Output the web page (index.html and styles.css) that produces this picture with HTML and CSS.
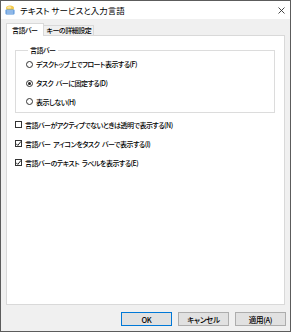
FILE: index.html
```html
<!DOCTYPE html>
<html lang="ja">
<head>
  <meta charset="UTF-8">
  <title>テキスト サービスと入力言語</title>
  <link rel="stylesheet" href="styles.css">
</head>
<body>

  <div class="window">
    <div class="titlebar">
      <svg class="app-icon" width="10" height="10" viewBox="0 0 10 10">
        <ellipse cx="5" cy="3" rx="4" ry="2.6" fill="#f2c94c"/>
        <ellipse cx="4.2" cy="2.4" rx="2" ry="1.2" fill="#fbe7a1"/>
        <rect x="0.5" y="4.5" width="9" height="5" rx="1" fill="#4f8fd8"/>
        <rect x="1.5" y="5.5" width="7" height="1" fill="#cfe2f7"/>
        <rect x="1.5" y="7.5" width="7" height="1" fill="#cfe2f7"/>
      </svg>
      <span class="title">テキスト サービスと入力言語</span>
      <svg class="close" width="7" height="7" viewBox="0 0 7 7">
        <path d="M0.5 0.5 L6.5 6.5 M6.5 0.5 L0.5 6.5" stroke="#333" stroke-width="0.9"/>
      </svg>
    </div>

    <div class="body">
      <div class="tabs">
        <div class="tab active">言語バー</div>
        <div class="tab">キーの詳細設定</div>
      </div>

      <div class="panel">
        <fieldset class="group">
          <legend>言語バー</legend>
          <label class="option">
            <span class="radio"></span>
            デスクトップ上でフロート表示する(F)
          </label>
          <label class="option">
            <span class="radio checked"></span>
            タスク バーに固定する(D)
          </label>
          <label class="option">
            <span class="radio"></span>
            表示しない(H)
          </label>
        </fieldset>

        <label class="check">
          <span class="box"></span>
          言語バーがアクティブでないときは透明で表示する(N)
        </label>
        <label class="check">
          <span class="box"><svg width="7" height="7" viewBox="0 0 7 7"><path d="M1 3.6 L2.8 5.4 L6 1.4" fill="none" stroke="#222" stroke-width="1"/></svg></span>
          言語バー アイコンをタスク バーで表示する(I)
        </label>
        <label class="check">
          <span class="box"><svg width="7" height="7" viewBox="0 0 7 7"><path d="M1 3.6 L2.8 5.4 L6 1.4" fill="none" stroke="#222" stroke-width="1"/></svg></span>
          言語バーのテキスト ラベルを表示する(E)
        </label>
      </div>

      <div class="buttons">
        <button class="default">OK</button>
        <button>キャンセル</button>
        <button>適用(A)</button>
      </div>
    </div>
  </div>

</body>
</html>
```

FILE: styles.css
```css
body {
  margin: 0;
  font-family: "Noto Sans CJK JP", sans-serif;
  font-feature-settings: "palt";
  font-size: 7px;
  font-weight: 500;
  letter-spacing: -0.5px;
  word-spacing: 1.5px;
  color: #000;
}

.window {
  width: 291px;
  height: 332px;
  box-sizing: border-box;
  border: 1px solid #5c5c5c;
  background-color: #f0f0f0;
  display: flex;
  flex-direction: column;
}

.titlebar {
  height: 18px;
  background-color: #fff;
  display: flex;
  align-items: center;
  padding: 0 5px 0 4px;
}

.app-icon {
  margin-right: 5px;
}

.title {
  flex: 1;
  font-size: 8.5px;
  font-weight: 400;
  letter-spacing: 0;
  word-spacing: 0;
}

.body {
  flex: 1;
  display: flex;
  flex-direction: column;
  padding: 4px 4px 4px 5px;
}

.tabs {
  display: flex;
  align-items: flex-end;
  height: 12px;
  position: relative;
  z-index: 1;
}

.tab {
  height: 9px;
  line-height: 9px;
  padding: 0 2px 0 3px;
  border: 1px solid #d9d9d9;
  border-bottom: none;
  margin-left: -1px;
  background-color: #f0f0f0;
}

.tab.active {
  height: 12px;
  line-height: 12px;
  padding: 0 5px 0 5px;
  margin-left: 0;
  margin-bottom: -1px;
  background-color: #fff;
}

.panel {
  height: 270px;
  width: 279px;
  box-sizing: border-box;
  border: 1px solid #d9d9d9;
  background-color: #fff;
  padding: 9px 9px 0 8px;
}

.group {
  margin: 0;
  padding: 0 0 1px 10px;
  border: 1px solid #dcdcdc;
}

.group legend {
  padding: 0 2px;
  margin-left: 2px;
  line-height: 10px;
}

.option,
.check {
  display: flex;
  align-items: center;
  height: 19px;
}

.option {
  height: 18.7px;
}

.radio {
  width: 7px;
  height: 7px;
  box-sizing: border-box;
  border: 1px solid #333;
  border-radius: 50%;
  margin-right: 3px;
  display: flex;
  align-items: center;
  justify-content: center;
}

.radio.checked::after {
  content: "";
  width: 3px;
  height: 3px;
  border-radius: 50%;
  background-color: #222;
}

.group + .check {
  margin-top: 2px;
}

.box {
  width: 7px;
  height: 7px;
  box-sizing: border-box;
  border: 1px solid #333;
  margin-right: 3px;
  display: flex;
}

.box svg {
  margin: -1px;
}

.buttons {
  display: flex;
  justify-content: flex-end;
  gap: 6px;
  margin-top: 7px;
}

button {
  width: 51px;
  height: 14px;
  padding: 0;
  font-family: inherit;
  font-size: 7.5px;
  font-weight: 500;
  letter-spacing: -0.3px;
  font-feature-settings: "palt";
  background-color: #e1e1e1;
  border: 1px solid #adadad;
  color: #000;
}

button.default {
  border-color: #0078d7;
}
```
